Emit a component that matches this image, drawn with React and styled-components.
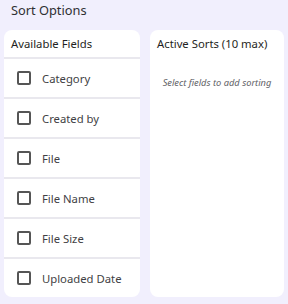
import React from 'react'
import styled, { createGlobalStyle } from 'styled-components'

const GlobalStyle = createGlobalStyle`
  html, body {
    margin: 0;
    padding: 0;
    background: #f1effd;
    font-family: 'Noto Sans', 'Open Sans', sans-serif;
  }
`

const fields = ['Category', 'Created by', 'File', 'File Name', 'File Size', 'Uploaded Date']

function App() {
  return (
    <>
      <GlobalStyle />
      <Page>
        <Title>Sort Options</Title>
        <Columns>
          <Card>
            <CardHeader>Available Fields</CardHeader>
            {fields.map((f) => (
              <Row key={f}>
                <Box />
                <Label>{f}</Label>
              </Row>
            ))}
          </Card>
          <Card>
            <CardHeader $plain>Active Sorts (10 max)</CardHeader>
            <Empty>Select fields to add sorting</Empty>
          </Card>
        </Columns>
      </Page>
    </>
  )
}

const Page = styled.div`
  width: 288px;
  height: 304px;
  box-sizing: border-box;
  padding: 0 4px 7px 4px;
  display: flex;
  flex-direction: column;
`

const Title = styled.div`
  font-size: 12.8px;
  line-height: 21px;
  color: #2f2f33;
  padding: 0 0 0 7px;
  height: 30px;
  box-sizing: border-box;
`

const Columns = styled.div`
  flex: 1;
  display: grid;
  grid-template-columns: 136px 134px;
  column-gap: 10px;
`

const Card = styled.div`
  background: #fff;
  border-radius: 8px;
  overflow: hidden;
  display: flex;
  flex-direction: column;
`

const CardHeader = styled.div`
  height: ${(p) => (p.$plain ? '27px' : '29px')};
  box-sizing: border-box;
  padding: 0 0 0 7px;
  line-height: 27px;
  font-size: 11.3px;
  color: #1f1f22;
  border-bottom: ${(p) => (p.$plain ? 'none' : '2px solid #e9e8ee')};
`

const Row = styled.div`
  height: 40px;
  box-sizing: border-box;
  display: flex;
  align-items: center;
  padding-left: 13px;
  border-bottom: 2px solid #e9e8ee;
  &:last-child {
    height: 38px;
    border-bottom: none;
  }
`

const Box = styled.span`
  width: 14px;
  height: 14px;
  box-sizing: border-box;
  border: 2px solid #555;
  border-radius: 2px;
`

const Label = styled.span`
  margin-left: 11px;
  font-size: 11.3px;
  color: #3f3f44;
`

const Empty = styled.div`
  margin-top: 19px;
  text-align: center;
  font-size: 9.3px;
  line-height: 14px;
  font-style: italic;
  color: #616166;
`

export default App
